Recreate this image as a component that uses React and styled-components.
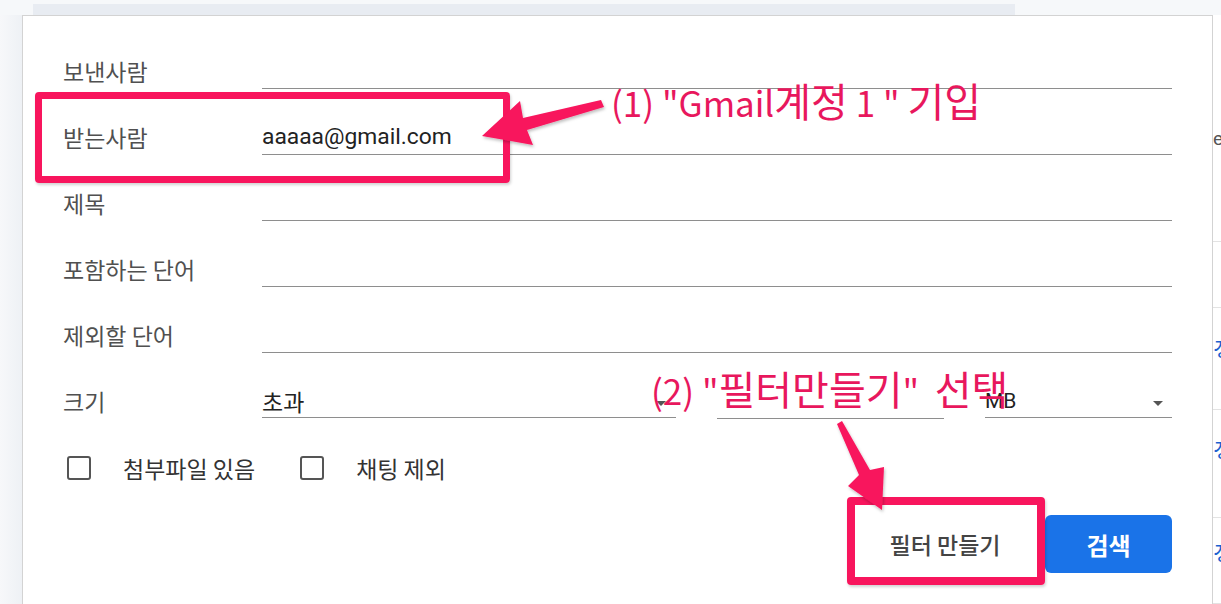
import styled, { createGlobalStyle } from 'styled-components';

const GlobalStyle = createGlobalStyle`
  body {
    margin: 0;
    background: #f3f5f8;
    font-family: Roboto, "Noto Sans CJK KR", sans-serif;
  }
`;

const FIELDS = [
  { label: '보낸사람', value: '' },
  { label: '받는사람', value: 'aaaaa@gmail.com' },
  { label: '제목', value: '' },
  { label: '포함하는 단어', value: '' },
  { label: '제외할 단어', value: '' },
];

// rows of the list that peeks out to the right of the dialog
const SIDE_ROWS = [
  { h: 227, pad: 112, text: 'e', blue: false },
  { h: 66, pad: 0, text: '', blue: false },
  { h: 102, pad: 30, text: '·정', blue: true },
  { h: 108, pad: 29, text: '·정', blue: true },
  { h: 86, pad: 24, text: '·정', blue: true },
];

export default function App() {
  return (
    <>
      <GlobalStyle />
      <Page>
        <TopBand>
          <Shade />
        </TopBand>
        <Main>
          <Gutter />
          <Card>
            {FIELDS.map((f) => (
              <FieldRow key={f.label}>
                <Label>{f.label}</Label>
                <Field>{f.value}</Field>
              </FieldRow>
            ))}
            <FieldRow>
              <Label>크기</Label>
              <SizeGroup>
                <Select width={414} caret={10}>
                  <span>초과</span>
                  <Caret />
                </Select>
                <Field style={{ width: 227 }} />
                <Select width={187} caret={9}>
                  <span>MB</span>
                  <Caret />
                </Select>
              </SizeGroup>
            </FieldRow>
            <CheckRow>
              <Box />
              <CheckLabel>첨부파일 있음</CheckLabel>
              <Box gap={45} />
              <CheckLabel>채팅 제외</CheckLabel>
            </CheckRow>
            <ButtonRow>
              <TextButton>필터 만들기</TextButton>
              <PrimaryButton>검색</PrimaryButton>
            </ButtonRow>
          </Card>
          <SidePane>
            {SIDE_ROWS.map((r, i) => (
              <SideRow key={i} h={r.h} pad={r.pad} blue={r.blue}>
                {r.text}
              </SideRow>
            ))}
          </SidePane>
        </Main>

        <Highlight left={35} top={92} w={475} h={91} stroke={7} />
        <Highlight left={847} top={497} w={198} h={88} stroke={8} />

        <Arrows width="1221" height="604" viewBox="0 0 1221 604">
          <defs>
            <filter id="sh" x="-20%" y="-20%" width="140%" height="140%">
              <feDropShadow dx="1" dy="2" stdDeviation="1.5" floodColor="#000" floodOpacity="0.25" />
            </filter>
          </defs>
          <polygon
            filter="url(#sh)"
            fill="#f8155d"
            points="601,100 604,107 527,130 533,145 482,136 520,101 523,118"
          />
          <polygon
            filter="url(#sh)"
            fill="#f8155d"
            points="837,424 842,421 870,470 884,467 882,510 848,486 859,475"
          />
        </Arrows>

        <Note left={611} top={77}>
          (1) "Gmail<Ko>계정</Ko> 1 " <Ko>기입</Ko>
        </Note>
        <Note left={651} top={365}>
          (2) "<Ko>필터만들기</Ko>"  <Ko>선택</Ko>
        </Note>
      </Page>
    </>
  );
}

const Page = styled.div`
  position: relative;
  width: 1221px;
  height: 604px;
  overflow: hidden;
  display: flex;
  flex-direction: column;
`;

const TopBand = styled.div`
  height: 15px;
  padding-top: 4px;
  box-sizing: border-box;
  background: #f6f8fa;
`;

const Shade = styled.div`
  margin-left: 33px;
  width: 982px;
  height: 11px;
  background: #e8ecf2;
`;

const Main = styled.div`
  flex: 1;
  display: flex;
`;

const Gutter = styled.div`
  width: 22px;
  background: linear-gradient(90deg, #f7f8fa, #eef1f5);
`;

const Card = styled.div`
  width: 1191px;
  box-sizing: border-box;
  background: #fff;
  border: 1px solid #d3d3d3;
  border-bottom: none;
  padding: 7px 40px 0 40px;
`;

const FieldRow = styled.div`
  display: grid;
  grid-template-columns: 199px 1fr;
  height: 66px;
  align-items: end;
`;

const Label = styled.div`
  font-family: "Noto Sans CJK KR", sans-serif;
  font-size: 23px;
  line-height: 32px;
  color: #505050;
  padding-bottom: 2px;
  white-space: nowrap;
`;

const Field = styled.div`
  height: 32px;
  border-bottom: 1px solid #8e8e8e;
  font-family: Roboto, "Noto Sans CJK KR", sans-serif;
  font-size: 22.8px;
  line-height: 32px;
  color: #222;
  padding-bottom: 1px;
`;

const SizeGroup = styled.div`
  display: flex;
  gap: 41px;
`;

const Select = styled.div`
  width: ${(p) => p.width}px;
  height: 33px;
  box-sizing: border-box;
  border-bottom: 1px solid #8e8e8e;
  padding-right: ${(p) => p.caret}px;
  display: flex;
  align-items: center;
  justify-content: space-between;
  font-family: Roboto, "Noto Sans CJK KR", sans-serif;
  font-size: 22px;
  color: #222;

  span {
    font-size: ${(p) => (p.width > 300 ? 23 : 21)}px;
  }
`;

const Caret = styled.div`
  width: 0;
  height: 0;
  border-left: 5px solid transparent;
  border-right: 5px solid transparent;
  border-top: 5px solid #555;
  margin-top: 4px;
`;

const CheckRow = styled.div`
  display: flex;
  align-items: center;
  margin-top: 37px;
  height: 24px;
`;

const Box = styled.div`
  width: 24px;
  height: 24px;
  box-sizing: border-box;
  border: 2.5px solid #555;
  border-radius: 3px;
  margin-left: ${(p) => p.gap || 4}px;
`;

const CheckLabel = styled.div`
  font-family: "Noto Sans CJK KR", sans-serif;
  font-size: 23px;
  color: #333;
  margin-left: 32px;
`;

const ButtonRow = styled.div`
  display: flex;
  justify-content: flex-end;
  margin-top: 35px;
`;

const TextButton = styled.button`
  width: 170px;
  height: 58px;
  margin-right: 15px;
  border: none;
  background: transparent;
  font-family: "Noto Sans CJK KR", sans-serif;
  font-size: 23px;
  font-weight: 500;
  color: #444;
  padding: 0;
`;

const PrimaryButton = styled.button`
  width: 127px;
  height: 58px;
  border: none;
  border-radius: 6px;
  background: #1a73e8;
  font-family: "Noto Sans CJK KR", sans-serif;
  font-size: 24px;
  font-weight: 700;
  color: #fff;
  padding: 0;
`;

const SidePane = styled.div`
  flex: 1;
  background: #fff;
  display: flex;
  flex-direction: column;
  overflow: hidden;
`;

const SideRow = styled.div`
  height: ${(p) => p.h}px;
  flex-shrink: 0;
  box-sizing: border-box;
  border-bottom: 1px solid #e3e3e3;
  padding-top: ${(p) => p.pad}px;
  font-family: Roboto, "Noto Sans CJK KR", sans-serif;
  font-size: ${(p) => (p.blue ? 20 : 19)}px;
  letter-spacing: ${(p) => (p.blue ? -4 : 0)}px;
  line-height: 24px;
  white-space: nowrap;
  color: ${(p) => (p.blue ? '#1a5fd0' : '#555')};
`;

const Highlight = styled.div`
  position: absolute;
  left: ${(p) => p.left}px;
  top: ${(p) => p.top}px;
  width: ${(p) => p.w}px;
  height: ${(p) => p.h}px;
  box-sizing: border-box;
  border: ${(p) => p.stroke}px solid #f8155d;
  border-radius: 4px;
  box-shadow: 1px 2px 3px rgba(0, 0, 0, 0.18);
`;

const Arrows = styled.svg`
  position: absolute;
  left: 0;
  top: 0;
  pointer-events: none;
`;

const Note = styled.div`
  position: absolute;
  left: ${(p) => p.left}px;
  top: ${(p) => p.top}px;
  font-family: "Noto Sans CJK KR", sans-serif;
  font-size: 35px;
  line-height: 46px;
  color: #e8175d;
  white-space: pre;
`;

const Ko = styled.span`
  font-size: 40px;
`;
